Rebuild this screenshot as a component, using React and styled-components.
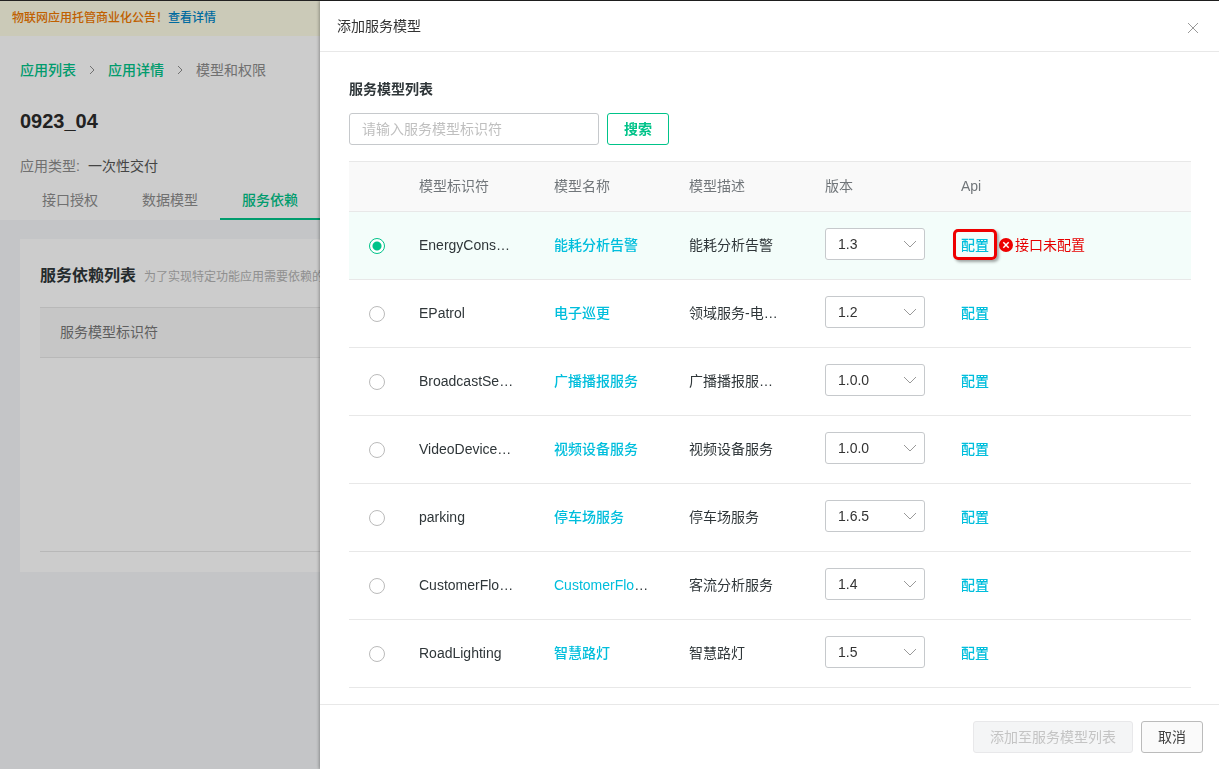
import { useState } from "react"
import styled, { createGlobalStyle } from "styled-components"

const GREEN = "#00c389"
const CYAN = "#00bedc"

const GlobalStyle = createGlobalStyle`
* {
  box-sizing: border-box;
}
body {
  margin: 0;
  font-family: "Liberation Sans", "Noto Sans CJK SC", sans-serif;
  font-size: 14px;
  line-height: 20px;
  color: #2f3639;
}
button, input, select {
  font: inherit;
}
a {
  text-decoration: none;
}
`

const Screen = styled.div`
min-height: 100vh;
background-color: #f5f7f9;
border-top: 1px solid #222;
overflow: hidden;
`
const Notice = styled.div`
padding: 8px 12px;
height: 35px;
font-size: 12px;
line-height: 18px;
font-weight: 500;
color: #f07800;
background-color: #fefde6;
`
const NoticeLink = styled.a`
color: #0086c8;
`
const PageHead = styled.header`
padding: 24px 20px 0;
background-color: #fff;
`
const Crumbs = styled.nav`
display: flex;
align-items: center;
gap: 12px;
color: #8c8c8c;
`
const CrumbLink = styled.a`
font-weight: 500;
color: ${GREEN};
`
const PageTitle = styled.h1`
margin: 26px 0 0;
font-size: 20px;
line-height: 30px;
font-weight: 700;
color: #2b2b2b;
`
const AppType = styled.p`
margin: 20px 0 0;
color: #8c8c8c;
`
const AppTypeValue = styled.span`
margin-left: 8px;
color: #555;
`
const Tabs = styled.div`
display: flex;
margin-top: 4px;
`
const Tab = styled.button`
width: 100px;
height: 40px;
padding: 2px 0 0;
border: none;
border-bottom: 2px solid ${props => props.$active ? GREEN : "transparent"};
background: none;
font-weight: ${props => props.$active ? 500 : 400};
color: ${props => props.$active ? GREEN : "#8c8c8c"};
`
const Card = styled.section`
margin: 19px 20px;
padding: 20px;
background-color: #fff;
`
const CardHead = styled.div`
display: flex;
align-items: baseline;
gap: 8px;
height: 48px;
line-height: 34px;
white-space: nowrap;
`
const CardTitle = styled.h2`
margin: 0;
font-size: 16px;
font-weight: 700;
`
const CardHint = styled.span`
font-size: 12px;
color: #b4b4b4;
`
const DependTable = styled.table`
width: 100%;
border-collapse: collapse;
th {
  height: 50px;
  padding: 0 20px 2px;
  text-align: left;
  font-weight: 400;
  color: #777;
  background-color: #f8f8f8;
  border-top: 1px solid #e6e6e6;
  border-bottom: 1px solid #e6e6e6;
}
td {
  height: 194px;
  border-bottom: 1px solid #e6e6e6;
}
`

const Mask = styled.div`
position: fixed;
inset: 1px 0 0;
background-color: rgba(0, 0, 0, 0.2);
`
const Drawer = styled.aside`
position: fixed;
inset: 1px 0 0 320px;
display: flex;
flex-direction: column;
background-color: #fff;
box-shadow: -1px 0 3px rgba(0, 0, 0, 0.3);
`
const DrawerHead = styled.div`
display: flex;
align-items: center;
justify-content: space-between;
height: 51px;
padding: 0 20px 0 17px;
border-bottom: 1px solid #e8e8e8;
`
const DrawerTitle = styled.h2`
margin: 0;
font-size: 14px;
font-weight: 400;
color: #333;
`
const CloseButton = styled.button`
display: flex;
padding: 4px 0 0;
border: none;
background: none;
color: #999;
`
const DrawerBody = styled.div`
flex: 1;
min-height: 0;
padding: 27px 28px 0 29px;
overflow: hidden;
`
const ListTitle = styled.h3`
margin: 0 0 14px;
font-size: 14px;
font-weight: 700;
`
const SearchForm = styled.form`
display: flex;
gap: 8px;
margin-bottom: 16px;
`
const SearchInput = styled.input`
width: 250px;
height: 32px;
padding: 0 12px;
border: 1px solid #c6c9cc;
border-radius: 3px;
&::placeholder {
  color: #bfbfbf;
}
`
const Button = styled.button`
height: 32px;
padding: 0 16px;
border: 1px solid ${props => props.$primary ? GREEN : "#bbb"};
border-radius: 3px;
background-color: ${props => props.$primary ? "#fff" : "#fafafa"};
font-weight: ${props => props.$primary ? 700 : 400};
color: ${props => props.$primary ? GREEN : "#444"};
&:disabled {
  border-color: #e8e8ea;
  background-color: #f4f5f6;
  color: #c4c4c4;
}
`
const ModelTable = styled.table`
width: 100%;
table-layout: fixed;
border-collapse: separate;
border-spacing: 0;
`
const Col = styled.col`
width: ${props => props.$width};
`
const HeadCell = styled.th`
height: 51px;
padding: 0 20px 2px;
text-align: left;
font-weight: 400;
color: #71767a;
background-color: #f9f9f9;
border-top: 1px solid #e8e8e8;
border-bottom: 1px solid #e8e8e8;
`
const Row = styled.tr`
background-color: ${props => props.$selected ? "#f3fdfa" : "#fff"};
`
const Cell = styled.td`
height: 68px;
padding: 0 20px 2px;
white-space: nowrap;
border-bottom: 1px solid #e8e8e8;
`
const Radio = styled.input`
display: block;
appearance: none;
width: 16px;
height: 16px;
margin: 2px 0 0;
border: 1px solid #bbb;
border-radius: 50%;
background-color: #fff;
&:checked {
  border-color: ${GREEN};
  background: radial-gradient(circle, ${GREEN} 4px, #fff 5px);
}
`
const ModelLink = styled.a`
font-weight: 500;
color: ${CYAN};
`
const SelectBox = styled.div`
position: relative;
width: 100px;
margin-bottom: 1px;
`
const Select = styled.select`
display: block;
appearance: none;
width: 100%;
height: 32px;
padding: 0 28px 0 12px;
border: 1px solid #c6c9cc;
border-radius: 3px;
background-color: #fff;
color: #333;
`
const Arrow = styled.svg`
position: absolute;
top: 12px;
right: 8px;
pointer-events: none;
`
const ApiCell = styled.div`
display: flex;
align-items: center;
`
const ConfigLink = styled(ModelLink)`
position: relative;
`
const Marker = styled.span`
position: absolute;
inset: -6px -8px -5px;
border: 3px solid #ee0000;
border-radius: 5px;
box-shadow: 2px 2px 3px rgba(0, 0, 0, 0.35);
`
const ApiError = styled.span`
display: flex;
align-items: center;
gap: 2px;
margin-left: 10px;
color: #e60000;
`
const DrawerFoot = styled.div`
display: flex;
justify-content: flex-end;
gap: 8px;
padding: 16px;
border-top: 1px solid #e8e8e8;
`

const models = [
  { id: "EnergyCons…", name: "能耗分析告警", desc: "能耗分析告警", version: "1.3", error: "接口未配置" },
  { id: "EPatrol", name: "电子巡更", desc: "领域服务-电…", version: "1.2" },
  { id: "BroadcastSe…", name: "广播播报服务", desc: "广播播报服…", version: "1.0.0" },
  { id: "VideoDevice…", name: "视频设备服务", desc: "视频设备服务", version: "1.0.0" },
  { id: "parking", name: "停车场服务", desc: "停车场服务", version: "1.6.5" },
  { id: "CustomerFlo…", name: "CustomerFlo", more: "…", desc: "客流分析服务", version: "1.4" },
  { id: "RoadLighting", name: "智慧路灯", desc: "智慧路灯", version: "1.5" },
]

const CrumbArrow = () => (
  <svg width="8" height="10" viewBox="0 0 8 10" fill="none" stroke="#8c8c8c">
    <path d="M2 1l4 4-4 4" />
  </svg>
)

const ErrorIcon = () => (
  <svg width="14" height="14" viewBox="0 0 14 14">
    <circle cx="7" cy="7" r="7" fill="#ee0000" />
    <path d="M4.3 4.3l5.4 5.4M9.7 4.3l-5.4 5.4" stroke="#fff" strokeWidth="1.5" />
  </svg>
)

const AppPage = () => (
  <Screen>
    <Notice>
      物联网应用托管商业化公告！<NoticeLink href="#notice">查看详情</NoticeLink>
    </Notice>
    <PageHead>
      <Crumbs>
        <CrumbLink href="#apps">应用列表</CrumbLink>
        <CrumbArrow />
        <CrumbLink href="#detail">应用详情</CrumbLink>
        <CrumbArrow />
        <span>模型和权限</span>
      </Crumbs>
      <PageTitle>0923_04</PageTitle>
      <AppType>应用类型:<AppTypeValue>一次性交付</AppTypeValue></AppType>
      <Tabs>
        <Tab>接口授权</Tab>
        <Tab>数据模型</Tab>
        <Tab $active>服务依赖</Tab>
      </Tabs>
    </PageHead>
    <Card>
      <CardHead>
        <CardTitle>服务依赖列表</CardTitle>
        <CardHint>为了实现特定功能应用需要依赖的</CardHint>
      </CardHead>
      <DependTable>
        <thead>
          <tr><th>服务模型标识符</th></tr>
        </thead>
        <tbody>
          <tr><td /></tr>
        </tbody>
      </DependTable>
    </Card>
  </Screen>
)

export default function App() {
  const [selected, setSelected] = useState("EnergyCons…")

  return (
    <>
      <GlobalStyle />
      <AppPage />
      <Mask />
      <Drawer role="dialog" aria-labelledby="drawer-title">
        <DrawerHead>
          <DrawerTitle id="drawer-title">添加服务模型</DrawerTitle>
          <CloseButton aria-label="关闭">
            <svg width="12" height="12" viewBox="0 0 12 12" stroke="currentColor">
              <path d="M1 1l10 10M11 1L1 11" />
            </svg>
          </CloseButton>
        </DrawerHead>
        <DrawerBody>
          <ListTitle>服务模型列表</ListTitle>
          <SearchForm onSubmit={(e) => e.preventDefault()}>
            <SearchInput aria-label="服务模型标识符" placeholder="请输入服务模型标识符" />
            <Button $primary>搜索</Button>
          </SearchForm>
          <ModelTable>
            <colgroup>
              <Col $width="50px" />
              <Col $width="135px" />
              <Col $width="135px" />
              <Col $width="136px" />
              <Col $width="136px" />
              <Col $width="auto" />
            </colgroup>
            <thead>
              <tr>
                <HeadCell />
                <HeadCell>模型标识符</HeadCell>
                <HeadCell>模型名称</HeadCell>
                <HeadCell>模型描述</HeadCell>
                <HeadCell>版本</HeadCell>
                <HeadCell>Api</HeadCell>
              </tr>
            </thead>
            <tbody>
              {models.map((model) => (
                <Row key={model.id} $selected={selected === model.id}>
                  <Cell>
                    <Radio
                      type="radio"
                      name="model"
                      aria-label={model.id}
                      checked={selected === model.id}
                      onChange={() => setSelected(model.id)}
                    />
                  </Cell>
                  <Cell>{model.id}</Cell>
                  <Cell><ModelLink href="#model">{model.name}</ModelLink>{model.more}</Cell>
                  <Cell>{model.desc}</Cell>
                  <Cell>
                    <SelectBox>
                      <Select aria-label="版本" defaultValue={model.version}>
                        <option>{model.version}</option>
                      </Select>
                      <Arrow width="14" height="8" viewBox="0 0 14 8" fill="none" stroke="#999">
                        <path d="M1 1l6 6 6-6" />
                      </Arrow>
                    </SelectBox>
                  </Cell>
                  <Cell>
                    <ApiCell>
                      <ConfigLink href="#config">
                        配置
                        {model.error && <Marker />}
                      </ConfigLink>
                      {model.error && <ApiError><ErrorIcon />{model.error}</ApiError>}
                    </ApiCell>
                  </Cell>
                </Row>
              ))}
            </tbody>
          </ModelTable>
        </DrawerBody>
        <DrawerFoot>
          <Button disabled>添加至服务模型列表</Button>
          <Button>取消</Button>
        </DrawerFoot>
      </Drawer>
    </>
  )
}
